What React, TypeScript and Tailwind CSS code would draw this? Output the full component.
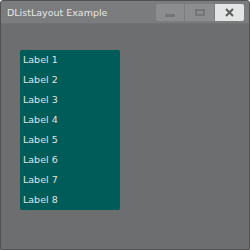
export default function App() {
  const labels = ['Label 1', 'Label 2', 'Label 3', 'Label 4', 'Label 5', 'Label 6', 'Label 7', 'Label 8'];

  return (
    <div
      className="w-[250px] h-[250px] flex flex-col bg-[#6c6e70] border border-[#4f5152] rounded-t-[3px] overflow-hidden"
      style={{ fontFamily: '"DejaVu Sans", sans-serif' }}
    >
      {/* title bar */}
      <div className="h-[23px] flex items-center justify-between bg-[#7a7c7d] border-b border-[#707273] pl-[6px] pr-[5px]">
        <span className="text-[9.5px] text-[#e6e6e6] leading-none pt-[1px]">DListLayout Example</span>
        <div className="flex gap-[1px] self-start mt-[3px]">
          <div className="w-[28px] h-[17px] bg-[#8b8d8f] flex items-center justify-center rounded-l-[2px]">
            <div className="w-[10px] h-[3px] bg-[#727476] mt-[5px]" />
          </div>
          <div className="w-[29px] h-[17px] bg-[#8b8d8f] flex items-center justify-center">
            <div className="w-[10px] h-[7px] border-2 border-[#727476]" />
          </div>
          <div className="w-[29px] h-[17px] bg-[#e3e4e4] flex items-center justify-center rounded-r-[2px]">
            <svg width="9" height="9" viewBox="0 0 9 9">
              <path d="M1 1L8 8M8 1L1 8" stroke="#5a5c5e" strokeWidth="2" />
            </svg>
          </div>
        </div>
      </div>

      {/* content */}
      <div className="flex-1 pt-[26px] pl-[19px]">
        <div className="w-[100px] bg-[#005c58] rounded-[2px] flex flex-col">
          {labels.map((l) => (
            <div key={l} className="h-[20px] flex items-center pl-[3px] text-[9.5px] text-[#e2e2e2]">
              {l}
            </div>
          ))}
        </div>
      </div>
    </div>
  );
}
